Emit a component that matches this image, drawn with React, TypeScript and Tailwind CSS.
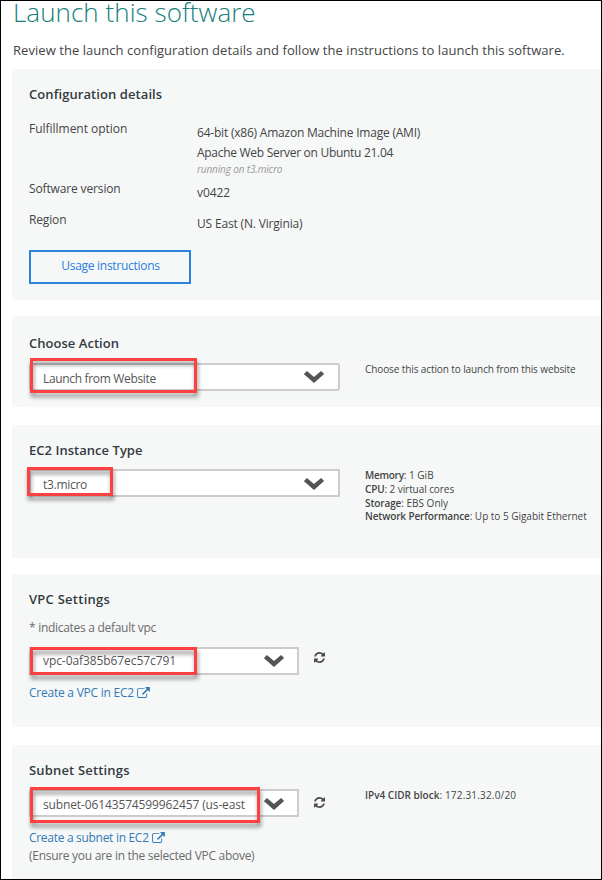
import type { ReactNode } from "react";

const heading = "text-[13px] leading-5 font-semibold text-[#333b40] whitespace-nowrap";
const body = "text-[12px] leading-[19px] whitespace-nowrap";
const small = "text-[10px] leading-[14px] whitespace-nowrap text-[#444]";

function Chevron({ className }: { className: string }) {
  return (
    <svg className={`h-3 w-[21px] shrink-0 ${className}`} viewBox="0 0 21 12" fill="#545454">
      <path d="M2.9 0 L10 6 L17.1 0 L20.1 3.1 L10 12 L-0.1 3.1 Z" />
    </svg>
  );
}

function Refresh({ className }: { className: string }) {
  return (
    <svg className={`h-[11px] w-[11px] shrink-0 ${className}`} viewBox="0 0 1536 1536" fill="#4a4a4a">
      <path d="M1511 928q0 5-1 7-64 268-268 434.5t-478 166.5q-146 0-282.5-55t-243.5-157l-129 129q-19 19-45 19t-45-19-19-45v-448q0-26 19-45t45-19h448q26 0 45 19t19 45-19 45l-137 137q71 66 161 102t187 36q134 0 250-65t186-179q11-17 53-117 8-23 30-23h192q13 0 22.5 9.5t9.5 22.5zm25-800v448q0 26-19 45t-45 19h-448q-26 0-45-19t-19-45 19-45l138-138q-148-137-349-137-134 0-250 65t-186 179q-11 17-53 117-8 23-30 23h-199q-13 0-22.5-9.5t-9.5-22.5v-7q65-268 270-434.5t480-166.5q146 0 284 55.5t245 156.5l130-129q19-19 45-19t45 19 19 45z" />
    </svg>
  );
}

function ExternalLink() {
  return (
    <svg className="ml-[3px] mt-[4px] h-[11px] w-[13px] shrink-0" viewBox="0 0 1792 1536" fill="#337ab7">
      <path d="M1408 928v320q0 119-84.5 203.5t-203.5 84.5h-832q-119 0-203.5-84.5t-84.5-203.5v-832q0-119 84.5-203.5t203.5-84.5h704q14 0 23 9t9 23v64q0 14-9 23t-23 9h-704q-66 0-113 47t-47 113v832q0 66 47 113t113 47h832q66 0 113-47t47-113v-320q0-14 9-23t23-9h64q14 0 23 9t9 23zm384-864v512q0 26-19 45t-45 19-45-19l-176-176-652 652q-10 10-23 10t-23-10l-114-114q-10-10-10-23t10-23l652-652-176-176q-19-19-19-45t19-45 45-19h512q26 0 45 19t19 45z" />
    </svg>
  );
}

/* Red annotation frame laid over a select box */
function Highlight({ className }: { className: string }) {
  return (
    <div
      className={`absolute border-3 border-[#fd4141] drop-shadow-[1px_4px_2px_rgba(0,0,0,0.45)] ${className}`}
    />
  );
}

function Select({
  className,
  textClass,
  chevron,
  highlight,
  children,
}: {
  className: string;
  textClass: string;
  chevron: string;
  highlight: string;
  children: ReactNode;
}) {
  return (
    <div className={`relative flex h-7 shrink-0 items-start justify-between border-2 border-[#ccc] bg-white pl-[12px] ${className}`}>
      <Highlight className={highlight} />
      <span className={`relative ${body} text-[#555] ${textClass}`}>{children}</span>
      <Chevron className={chevron} />
    </div>
  );
}

function Panel({ className, children }: { className: string; children: ReactNode }) {
  return <section className={`shrink-0 bg-[#f6f8f8] pl-[17px] ${className}`}>{children}</section>;
}

export default function App() {
  return (
    <main className="flex h-[880px] w-[602px] flex-col border border-black bg-white pl-[11px] font-['Open_Sans','Noto_Sans',sans-serif] text-[#444]">
      <h1 className="h-[22px] shrink-0 pl-px text-[26px] leading-[22px] font-light tracking-[0.04px] whitespace-nowrap text-[#16807c]">
        Launch this software
      </h1>
      <p className="mt-[17px] shrink-0 pl-px text-[13px] leading-5 tracking-[0.05px] whitespace-nowrap text-[#444]">
        Review the launch configuration details and follow the instructions to launch this software.
      </p>

      <Panel className="mt-[9px] h-[231px] pt-[15px]">
        <h2 className={`${heading} tracking-[0.08px]`}>Configuration details</h2>
        <dl className="mt-[15px] grid grid-cols-[168px_1fr] grid-rows-[60px_31px_40px]">
          <dt className={`${body} font-medium tracking-[-0.02px]`}>Fulfillment option</dt>
          <dd className="pt-1">
            <p className={`${body} mb-px tracking-[-0.21px]`}>64-bit (x86) Amazon Machine Image (AMI)</p>
            <p className={`${body} tracking-[-0.29px]`}>Apache Web Server on Ubuntu 21.04</p>
            <p className="text-[10px] leading-[14px] tracking-[-0.14px] whitespace-nowrap text-[#999] italic">
              running on t3.micro
            </p>
          </dd>
          <dt className={`${body} font-medium tracking-[-0.14px]`}>Software version</dt>
          <dd className={`${body} pt-1 tracking-[-0.09px]`}>v0422</dd>
          <dt className={`${body} font-medium tracking-[-0.15px]`}>Region</dt>
          <dd className={`${body} pt-1 tracking-[-0.17px]`}>US East (N. Virginia)</dd>
        </dl>
        <button className={`block h-[34px] w-[162px] border-2 border-[#2a83dc] pb-[3px] pl-px text-center ${body} tracking-[-0.29px] text-[#2a7de0]`}>
          Usage instructions
        </button>
      </Panel>

      <Panel className="mt-4 h-[91px] pt-[17px]">
        <h2 className={`${heading} tracking-[0.03px]`}>Choose Action</h2>
        <div className="mt-[10px] flex items-start">
          <Select
            className="w-[311px] rounded-[3px]"
            textClass="mt-1 tracking-[-0.33px]"
            chevron="mt-[6px] mr-[13px]"
            highlight="-top-[7px] -left-[1px] h-[35px] w-[167px]"
          >
            Launch from Website
          </Select>
          <p className={`${small} -mt-px ml-[25px] tracking-[-0.1px]`}>Choose this action to launch from this website</p>
        </div>
      </Panel>

      <Panel className="mt-[18px] h-[133px] pt-[15px]">
        <h2 className={`${heading} tracking-[0.03px]`}>EC2 Instance Type</h2>
        <div className="mt-[9px] flex items-start">
          <Select
            className="w-[311px]"
            textClass="mt-1 tracking-[-0.29px]"
            chevron="mt-[7px] mr-[13px]"
            highlight="-top-[4px] -left-[4px] h-[29px] w-[86px]"
          >
            t3.micro
          </Select>
          <div className={`${small} -mt-px ml-[25px]`}>
            <p>
              <b className="font-semibold tracking-[-0.25px]">Memory</b>: 1 GiB
            </p>
            <p className="tracking-[-0.07px]">
              <b className="font-semibold tracking-[-0.15px]">CPU</b>: 2 virtual cores
            </p>
            <p>
              <b className="font-semibold tracking-[-0.1px]">Storage</b>: EBS Only
            </p>
            <p className="-mt-px">
              <b className="font-semibold tracking-[-0.13px]">Network Performance</b>
              <span className="tracking-[-0.02px]">: Up to 5 Gigabit Ethernet</span>
            </p>
          </div>
        </div>
      </Panel>

      <Panel className="mt-4 h-[153px] pt-[15px]">
        <h2 className={`${heading} tracking-[0.25px]`}>VPC Settings</h2>
        <p className={`${body} mt-[9px] tracking-[-0.29px] text-[#6b6b6b]`}>* indicates a default vpc</p>
        <div className="mt-[10px] flex items-start">
          <Select
            className="w-[270px]"
            textClass="mt-[2px] tracking-[-0.08px]"
            chevron="mt-[6px] mr-[12px]"
            highlight="-top-[2px] -left-[1px] h-7 w-[167px]"
          >
            vpc-0af385b67ec57c791
          </Select>
          <Refresh className="mt-[5px] ml-[15px]" />
        </div>
        <a className={`${body} mt-2 flex items-start tracking-[-0.24px] text-[#337ab7]`}>
          Create a VPC in EC2
          <ExternalLink />
        </a>
      </Panel>

      <Panel className="mt-[18px] h-[134px] pt-[15px]">
        <h2 className={`${heading} tracking-[0.17px]`}>Subnet Settings</h2>
        <div className="mt-[9px] flex items-start">
          <Select
            className="w-[270px]"
            textClass="mt-1 tracking-[-0.13px]"
            chevron="mt-[7px] mr-[12px]"
            highlight="-top-[4px] -left-[1px] h-9 w-[230px]"
          >
            subnet-06143574599962457 (us-east
          </Select>
          <Refresh className="mt-2 ml-[15px]" />
          <p className={`${small} -mt-px ml-[40px]`}>
            <b className="font-semibold">IPv4 CIDR block</b>
            <span className="tracking-[0.18px]">: 172.31.32.0/20</span>
          </p>
        </div>
        <a className={`${body} mt-[11px] flex items-start tracking-[-0.3px] text-[#337ab7]`}>
          Create a subnet in EC2
          <ExternalLink />
        </a>
        <p className={`${body} -mt-px tracking-[-0.29px] text-[#6b6b6b]`}>(Ensure you are in the selected VPC above)</p>
      </Panel>
    </main>
  );
}
